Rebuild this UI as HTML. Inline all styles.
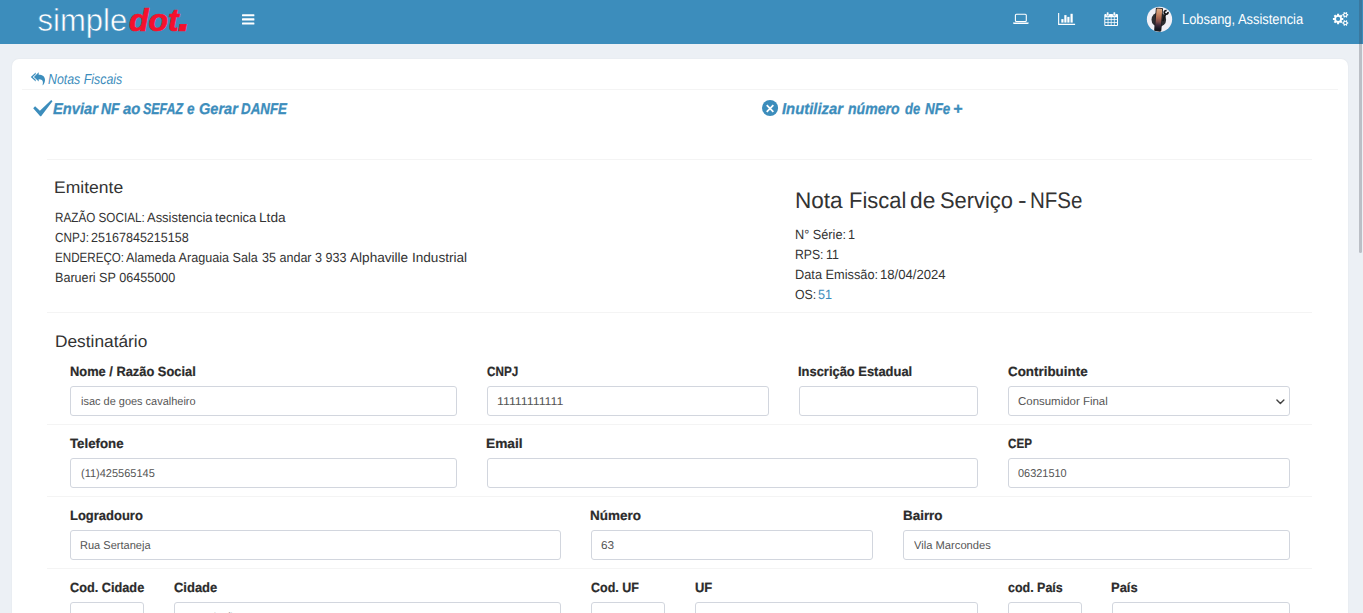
<!DOCTYPE html>
<html lang="pt-br">
<head>
<meta charset="utf-8">
<title>Nota Fiscal de Serviço - NFSe</title>
<style>
*{box-sizing:border-box}
html,body{margin:0;padding:0}
body{width:1363px;height:613px;overflow:hidden;position:relative;background:#ecf0f5;font-family:"Liberation Sans",sans-serif;color:#333}
.navbar{position:absolute;left:0;top:0;width:1363px;height:44px;background:#3c8dbc}
.card{position:absolute;left:12px;top:59px;width:1336px;height:600px;background:#fff;border-radius:7px 7px 0 0;box-shadow:0 0 2px rgba(0,0,0,.06)}
.tx{position:absolute;white-space:nowrap;text-rendering:geometricPrecision;transform-origin:0 0;line-height:1;margin:0;padding:0;display:block}
.hr{position:absolute;height:1px;background:#f4f4f4}
.fc{position:absolute;height:30px;border:1px solid #d2d6de;border-radius:3px;background:#fff}
svg{position:absolute;overflow:visible}
.logo{position:absolute;white-space:nowrap;line-height:1;transform-origin:0 0}
.sb{position:absolute;left:1359px;width:3px}
</style>
</head>
<body>

<header class="navbar">
</header>
<main class="card"></main>
<div class="hr" style="left:22px;top:89px;width:1316px"></div>
<div class="hr" style="left:47px;top:159px;width:1265px"></div>
<div class="hr" style="left:47px;top:312px;width:1265px"></div>
<div class="hr" style="left:47px;top:424px;width:1265px"></div>
<div class="hr" style="left:47px;top:496px;width:1265px"></div>
<div class="hr" style="left:47px;top:568px;width:1265px"></div>
<div class="fc" style="left:70px;top:386px;width:387px"></div>
<div class="fc" style="left:487px;top:386px;width:282px"></div>
<div class="fc" style="left:799px;top:386px;width:179px"></div>
<div class="fc" style="left:1008px;top:386px;width:282px"></div>
<div class="fc" style="left:70px;top:458px;width:387px"></div>
<div class="fc" style="left:487px;top:458px;width:491px"></div>
<div class="fc" style="left:1008px;top:458px;width:282px"></div>
<div class="fc" style="left:70px;top:530px;width:491px"></div>
<div class="fc" style="left:591px;top:530px;width:282px"></div>
<div class="fc" style="left:903px;top:530px;width:387px"></div>
<div class="fc" style="left:70px;top:602px;width:74px"></div>
<div class="fc" style="left:174px;top:602px;width:387px"></div>
<div class="fc" style="left:591px;top:602px;width:74px"></div>
<div class="fc" style="left:695px;top:602px;width:283px"></div>
<div class="fc" style="left:1008px;top:602px;width:74px"></div>
<div class="fc" style="left:1112px;top:602px;width:178px"></div>
<span class="tx" style="left:1181.87px;top:12px;line-height:16px;font-size:14.5px;font-weight:400;font-style:normal;color:#fff;transform:scaleX(0.8894)">Lobsang, Assistencia</span>
<span class="tx" style="left:47.50px;top:72px;line-height:16px;font-size:14.4px;font-weight:400;font-style:italic;color:#3c8dbc;transform:scaleX(0.8592)">Notas Fiscais</span>
<span class="tx" style="left:52.81px;top:101px;line-height:17px;font-size:15.6px;font-weight:700;font-style:italic;color:#3c8dbc;-webkit-text-stroke:0.3px #3c8dbc;transform:scaleX(0.9414)">Enviar</span>
<span class="tx" style="left:100.93px;top:101px;line-height:17px;font-size:15.6px;font-weight:700;font-style:italic;color:#3c8dbc;-webkit-text-stroke:0.3px #3c8dbc;transform:scaleX(0.8936)">NF</span>
<span class="tx" style="left:122.50px;top:101px;line-height:17px;font-size:15.6px;font-weight:700;font-style:italic;color:#3c8dbc;-webkit-text-stroke:0.3px #3c8dbc;transform:scaleX(0.9500)">ao</span>
<span class="tx" style="left:143.26px;top:101px;line-height:17px;font-size:15.6px;font-weight:700;font-style:italic;color:#3c8dbc;-webkit-text-stroke:0.3px #3c8dbc;transform:scaleX(0.7979)">SEFAZ</span>
<span class="tx" style="left:187.24px;top:101px;line-height:17px;font-size:15.6px;font-weight:700;font-style:italic;color:#3c8dbc;-webkit-text-stroke:0.3px #3c8dbc;transform:scaleX(0.8706)">e</span>
<span class="tx" style="left:198.57px;top:101px;line-height:17px;font-size:15.6px;font-weight:700;font-style:italic;color:#3c8dbc;-webkit-text-stroke:0.3px #3c8dbc;transform:scaleX(0.9341)">Gerar</span>
<span class="tx" style="left:240.64px;top:101px;line-height:17px;font-size:15.6px;font-weight:700;font-style:italic;color:#3c8dbc;-webkit-text-stroke:0.3px #3c8dbc;transform:scaleX(0.8556)">DANFE</span>
<span class="tx" style="left:781.91px;top:101px;line-height:17px;font-size:15.6px;font-weight:700;font-style:italic;color:#3c8dbc;-webkit-text-stroke:0.3px #3c8dbc;transform:scaleX(0.9519)">Inutilizar</span>
<span class="tx" style="left:848.13px;top:101px;line-height:17px;font-size:15.6px;font-weight:700;font-style:italic;color:#3c8dbc;-webkit-text-stroke:0.3px #3c8dbc;transform:scaleX(0.9011)">número</span>
<span class="tx" style="left:904.77px;top:101px;line-height:17px;font-size:15.6px;font-weight:700;font-style:italic;color:#3c8dbc;-webkit-text-stroke:0.3px #3c8dbc;transform:scaleX(0.8295)">de</span>
<span class="tx" style="left:924.84px;top:101px;line-height:17px;font-size:15.6px;font-weight:700;font-style:italic;color:#3c8dbc;-webkit-text-stroke:0.3px #3c8dbc;transform:scaleX(0.8587)">NFe</span>
<span class="tx" style="left:952.85px;top:101px;line-height:17px;font-size:15.6px;font-weight:700;font-style:italic;color:#3c8dbc;-webkit-text-stroke:0.3px #3c8dbc;transform:scaleX(1.0385)">+</span>
<span class="tx" style="left:54.34px;top:178px;line-height:19px;font-size:16.8px;font-weight:400;font-style:normal;color:#333;transform:scaleX(1.0443)">Emitente</span>
<span class="tx" style="left:54.63px;top:210px;line-height:15px;font-size:13.3px;font-weight:400;font-style:normal;color:#333;transform:scaleX(0.8800)">RAZÃO SOCIAL:</span>
<span class="tx" style="left:146.77px;top:210px;line-height:15px;font-size:13.3px;font-weight:400;font-style:normal;color:#333;transform:scaleX(0.9737)">Assistencia</span>
<span class="tx" style="left:215.07px;top:210px;line-height:15px;font-size:13.3px;font-weight:400;font-style:normal;color:#333;transform:scaleX(0.9821)">tecnica</span>
<span class="tx" style="left:258.68px;top:210px;line-height:15px;font-size:13.3px;font-weight:400;font-style:normal;color:#333;transform:scaleX(1.0305)">Ltda</span>
<span class="tx" style="left:55.07px;top:230px;line-height:15px;font-size:13.3px;font-weight:400;font-style:normal;color:#333;transform:scaleX(0.8821)">CNPJ:</span>
<span class="tx" style="left:90.74px;top:230px;line-height:15px;font-size:13.3px;font-weight:400;font-style:normal;color:#333;transform:scaleX(0.9444)">25167845215158</span>
<span class="tx" style="left:54.65px;top:250px;line-height:15px;font-size:13.3px;font-weight:400;font-style:normal;color:#333;transform:scaleX(0.8737)">ENDEREÇO:</span>
<span class="tx" style="left:126.28px;top:250px;line-height:15px;font-size:13.3px;font-weight:400;font-style:normal;color:#333;transform:scaleX(0.9487)">Alameda Araguaia Sala</span>
<span class="tx" style="left:262.00px;top:250px;line-height:15px;font-size:13.3px;font-weight:400;font-style:normal;color:#333;transform:scaleX(0.9440)">35 andar 3 933</span>
<span class="tx" style="left:350.06px;top:250px;line-height:15px;font-size:13.3px;font-weight:400;font-style:normal;color:#333;transform:scaleX(1.0222)">Alphaville Industrial</span>
<span class="tx" style="left:54.57px;top:270px;line-height:15px;font-size:13.3px;font-weight:400;font-style:normal;color:#333;transform:scaleX(0.9477)">Barueri SP 06455000</span>
<span class="tx" style="left:794.60px;top:188px;line-height:25px;font-size:22.6px;font-weight:400;font-style:normal;color:#333;transform:scaleX(0.9990)">Nota</span>
<span class="tx" style="left:848.56px;top:188px;line-height:25px;font-size:22.6px;font-weight:400;font-style:normal;color:#333;transform:scaleX(0.9711)">Fiscal</span>
<span class="tx" style="left:910.48px;top:188px;line-height:25px;font-size:22.6px;font-weight:400;font-style:normal;color:#333;transform:scaleX(1.0056)">de</span>
<span class="tx" style="left:940.23px;top:188px;line-height:25px;font-size:22.6px;font-weight:400;font-style:normal;color:#333;transform:scaleX(0.9683)">Serviço</span>
<span class="tx" style="left:1017.60px;top:188px;line-height:25px;font-size:22.6px;font-weight:400;font-style:normal;color:#333;transform:scaleX(1.1494)">-</span>
<span class="tx" style="left:1030.28px;top:188px;line-height:25px;font-size:22.6px;font-weight:400;font-style:normal;color:#333;transform:scaleX(0.9085)">NFSe</span>
<span class="tx" style="left:794.96px;top:227px;line-height:15px;font-size:13.3px;font-weight:400;font-style:normal;color:#333;transform:scaleX(0.9560)">N° Série:</span>
<span class="tx" style="left:848.01px;top:227px;line-height:15px;font-size:13.3px;font-weight:400;font-style:normal;color:#333;transform:scaleX(0.9541)">1</span>
<span class="tx" style="left:794.99px;top:247px;line-height:15px;font-size:13.3px;font-weight:400;font-style:normal;color:#333;transform:scaleX(0.9176)">RPS:</span>
<span class="tx" style="left:825.53px;top:247px;line-height:15px;font-size:13.3px;font-weight:400;font-style:normal;color:#333;transform:scaleX(0.9332)">11</span>
<span class="tx" style="left:794.96px;top:267px;line-height:15px;font-size:13.3px;font-weight:400;font-style:normal;color:#333;transform:scaleX(0.9614)">Data Emissão:</span>
<span class="tx" style="left:880.38px;top:267px;line-height:15px;font-size:13.3px;font-weight:400;font-style:normal;color:#333;transform:scaleX(0.9859)">18/04/2024</span>
<span class="tx" style="left:795.48px;top:287px;line-height:15px;font-size:13.3px;font-weight:400;font-style:normal;color:#333;transform:scaleX(0.9289)">OS:</span>
<span class="tx" style="left:818.42px;top:287px;line-height:15px;font-size:13.3px;font-weight:400;font-style:normal;color:#3c8dbc;transform:scaleX(0.9524)">51</span>
<span class="tx" style="left:54.56px;top:332px;line-height:19px;font-size:16.8px;font-weight:400;font-style:normal;color:#333;transform:scaleX(1.0311)">Destinatário</span>
<label class="tx" style="left:69.73px;top:364px;line-height:15px;font-size:13.3px;font-weight:700;font-style:normal;color:#2b2b2b;-webkit-text-stroke:0.22px #2b2b2b;transform:scaleX(0.9666)">Nome / Razão Social</label>
<label class="tx" style="left:486.88px;top:364px;line-height:15px;font-size:13.3px;font-weight:700;font-style:normal;color:#2b2b2b;-webkit-text-stroke:0.22px #2b2b2b;transform:scaleX(0.8800)">CNPJ</label>
<label class="tx" style="left:798.43px;top:364px;line-height:15px;font-size:13.3px;font-weight:700;font-style:normal;color:#2b2b2b;-webkit-text-stroke:0.22px #2b2b2b;transform:scaleX(0.9716)">Inscrição Estadual</label>
<label class="tx" style="left:1007.72px;top:364px;line-height:15px;font-size:13.3px;font-weight:700;font-style:normal;color:#2b2b2b;-webkit-text-stroke:0.22px #2b2b2b;transform:scaleX(1.0072)">Contribuinte</label>
<label class="tx" style="left:70.47px;top:436px;line-height:15px;font-size:13.3px;font-weight:700;font-style:normal;color:#2b2b2b;-webkit-text-stroke:0.22px #2b2b2b;transform:scaleX(0.9970)">Telefone</label>
<label class="tx" style="left:486.27px;top:436px;line-height:15px;font-size:13.3px;font-weight:700;font-style:normal;color:#2b2b2b;-webkit-text-stroke:0.22px #2b2b2b;transform:scaleX(1.0303)">Email</label>
<label class="tx" style="left:1007.78px;top:436px;line-height:15px;font-size:13.3px;font-weight:700;font-style:normal;color:#2b2b2b;-webkit-text-stroke:0.22px #2b2b2b;transform:scaleX(0.8741)">CEP</label>
<label class="tx" style="left:69.72px;top:508px;line-height:15px;font-size:13.3px;font-weight:700;font-style:normal;color:#2b2b2b;-webkit-text-stroke:0.22px #2b2b2b;transform:scaleX(0.9767)">Logradouro</label>
<label class="tx" style="left:590.39px;top:508px;line-height:15px;font-size:13.3px;font-weight:700;font-style:normal;color:#2b2b2b;-webkit-text-stroke:0.22px #2b2b2b;transform:scaleX(1.0131)">Número</label>
<label class="tx" style="left:902.59px;top:508px;line-height:15px;font-size:13.3px;font-weight:700;font-style:normal;color:#2b2b2b;-webkit-text-stroke:0.22px #2b2b2b;transform:scaleX(1.0090)">Bairro</label>
<label class="tx" style="left:70.24px;top:580px;line-height:15px;font-size:13.3px;font-weight:700;font-style:normal;color:#2b2b2b;-webkit-text-stroke:0.22px #2b2b2b;transform:scaleX(0.9567)">Cod. Cidade</label>
<label class="tx" style="left:173.93px;top:580px;line-height:15px;font-size:13.3px;font-weight:700;font-style:normal;color:#2b2b2b;-webkit-text-stroke:0.22px #2b2b2b;transform:scaleX(0.9758)">Cidade</label>
<label class="tx" style="left:590.95px;top:580px;line-height:15px;font-size:13.3px;font-weight:700;font-style:normal;color:#2b2b2b;-webkit-text-stroke:0.22px #2b2b2b;transform:scaleX(0.9380)">Cod. UF</label>
<label class="tx" style="left:694.52px;top:580px;line-height:15px;font-size:13.3px;font-weight:700;font-style:normal;color:#2b2b2b;-webkit-text-stroke:0.22px #2b2b2b;transform:scaleX(0.9750)">UF</label>
<label class="tx" style="left:1007.76px;top:580px;line-height:15px;font-size:13.3px;font-weight:700;font-style:normal;color:#2b2b2b;-webkit-text-stroke:0.22px #2b2b2b;transform:scaleX(0.9383)">cod. País</label>
<label class="tx" style="left:1111.23px;top:580px;line-height:15px;font-size:13.3px;font-weight:700;font-style:normal;color:#2b2b2b;-webkit-text-stroke:0.22px #2b2b2b;transform:scaleX(0.9728)">País</label>
<span class="tx" style="left:80.86px;top:396px;line-height:12px;font-size:11.4px;font-weight:400;font-style:normal;color:#555;transform:scaleX(0.9624)">isac de goes cavalheiro</span>
<span class="tx" style="left:497.28px;top:396px;line-height:12px;font-size:11.4px;font-weight:400;font-style:normal;color:#555;transform:scaleX(1.0841)">11111111111</span>
<span class="tx" style="left:1018.27px;top:396px;line-height:12px;font-size:11.4px;font-weight:400;font-style:normal;color:#555;transform:scaleX(1.0052)">Consumidor Final</span>
<span class="tx" style="left:81.07px;top:468px;line-height:12px;font-size:11.4px;font-weight:400;font-style:normal;color:#555;transform:scaleX(0.9653)">(11)425565145</span>
<span class="tx" style="left:1018.39px;top:468px;line-height:12px;font-size:11.4px;font-weight:400;font-style:normal;color:#555;transform:scaleX(0.9599)">06321510</span>
<span class="tx" style="left:80.20px;top:540px;line-height:12px;font-size:11.4px;font-weight:400;font-style:normal;color:#555;transform:scaleX(0.9686)">Rua Sertaneja</span>
<span class="tx" style="left:601.06px;top:540px;line-height:12px;font-size:11.4px;font-weight:400;font-style:normal;color:#555;transform:scaleX(1.0353)">63</span>
<span class="tx" style="left:913.78px;top:540px;line-height:12px;font-size:11.4px;font-weight:400;font-style:normal;color:#555;transform:scaleX(0.9812)">Vila Marcondes</span>
<span class="tx" style="left:184.51px;top:612px;line-height:12px;font-size:11.4px;font-weight:400;font-style:normal;color:#555;transform:scaleX(0.9287)">Carapicuíba</span>
<div class="logo" style="left:37.6px;top:5.2px;font-size:31px;color:#fff"><span style="-webkit-text-stroke:0.55px #3c8dbc">simple</span><span style="display:inline-block;transform-origin:0 100%;transform:scaleX(1.03);margin-left:1.6px;font-weight:700;font-style:italic;color:#f5102c;-webkit-text-stroke:0.7px #f5102c">dot<span style="font-size:44px;line-height:0;margin-left:-0.9px">.</span></span></div>
<svg style="left:242px;top:13.6px" width="12.4" height="10.8" viewBox="0 0 12.4 10.8"><rect x="0" y="0.2" width="12.4" height="2.1" rx=".5" fill="#fff"/><rect x="0" y="4.3" width="12.4" height="2.1" rx=".5" fill="#fff"/><rect x="0" y="8.4" width="12.4" height="2.1" rx=".5" fill="#fff"/></svg>
<svg style="left:0;top:0" width="1363" height="44" viewBox="0 0 1363 44"><rect x="1015.4" y="14.2" width="10.9" height="7.3" rx="1" fill="none" stroke="#fff" stroke-width="1.1"/><path d="M1013 22.4h15.7v.5q0 1-1.2 1h-13.3q-1.2 0-1.2-1z" fill="#fff"/><path d="M1058.1 13.1h1.1v10.7h15.9v1.1h-17z" fill="#fff"/><rect x="1061.3" y="19.1" width="2.2" height="3.5" fill="#fff"/><rect x="1064.3" y="15.1" width="2.2" height="7.5" fill="#fff"/><rect x="1067.3" y="16.9" width="2.2" height="5.7" fill="#fff"/><rect x="1070.5" y="13.8" width="2.2" height="8.8" fill="#fff"/><path fill-rule="evenodd" fill="#fff" d="M1105.3 13.9H1117.0q1 0 1 1V25.0q0 1 -1 1H1105.3q-1 0 -1 -1V14.9q0 -1 1 -1z M1105.30 17.20h2.36v2.10h-2.36z M1108.41 17.20h2.36v2.10h-2.36z M1111.53 17.20h2.36v2.10h-2.36z M1114.64 17.20h2.36v2.10h-2.36z M1105.30 20.05h2.36v2.10h-2.36z M1108.41 20.05h2.36v2.10h-2.36z M1111.53 20.05h2.36v2.10h-2.36z M1114.64 20.05h2.36v2.10h-2.36z M1105.30 22.90h2.36v2.10h-2.36z M1108.41 22.90h2.36v2.10h-2.36z M1111.53 22.90h2.36v2.10h-2.36z M1114.64 22.90h2.36v2.10h-2.36z"/><rect x="1106.6000000000001" y="11.9" width="2.2" height="3.9" rx="1" fill="#fff" stroke="#3c8dbc" stroke-width=".5"/><rect x="1113.2" y="11.9" width="2.2" height="3.9" rx="1" fill="#fff" stroke="#3c8dbc" stroke-width=".5"/><path fill-rule="evenodd" fill="#fff" d="M1343.30 17.92 L1343.30 19.98 L1341.97 19.96 L1341.55 20.97 L1342.51 21.89 L1341.04 23.36 L1340.12 22.40 L1339.11 22.82 L1339.13 24.15 L1337.07 24.15 L1337.09 22.82 L1336.08 22.40 L1335.16 23.36 L1333.69 21.89 L1334.65 20.97 L1334.23 19.96 L1332.90 19.98 L1332.90 17.92 L1334.23 17.94 L1334.65 16.93 L1333.69 16.01 L1335.16 14.54 L1336.08 15.50 L1337.09 15.08 L1337.07 13.75 L1339.13 13.75 L1339.11 15.08 L1340.12 15.50 L1341.04 14.54 L1342.51 16.01 L1341.55 16.93 L1341.97 17.94Z M1340.20 18.95 A2.1 2.1 0 1 0 1336.00 18.95 A2.1 2.1 0 1 0 1340.20 18.95Z"/><path fill-rule="evenodd" fill="#fff" d="M1348.20 14.02 L1348.20 15.58 L1347.28 15.50 L1346.90 16.16 L1347.42 16.92 L1346.08 17.70 L1345.68 16.86 L1344.92 16.86 L1344.52 17.70 L1343.18 16.92 L1343.70 16.16 L1343.32 15.50 L1342.40 15.58 L1342.40 14.02 L1343.32 14.10 L1343.70 13.44 L1343.18 12.68 L1344.52 11.90 L1344.92 12.74 L1345.68 12.74 L1346.08 11.90 L1347.42 12.68 L1346.90 13.44 L1347.28 14.10Z M1346.45 14.80 A1.15 1.15 0 1 0 1344.15 14.80 A1.15 1.15 0 1 0 1346.45 14.80Z"/><path fill-rule="evenodd" fill="#fff" d="M1348.20 22.22 L1348.20 23.78 L1347.28 23.70 L1346.90 24.36 L1347.42 25.12 L1346.08 25.90 L1345.68 25.06 L1344.92 25.06 L1344.52 25.90 L1343.18 25.12 L1343.70 24.36 L1343.32 23.70 L1342.40 23.78 L1342.40 22.22 L1343.32 22.30 L1343.70 21.64 L1343.18 20.88 L1344.52 20.10 L1344.92 20.94 L1345.68 20.94 L1346.08 20.10 L1347.42 20.88 L1346.90 21.64 L1347.28 22.30Z M1346.45 23.00 A1.15 1.15 0 1 0 1344.15 23.00 A1.15 1.15 0 1 0 1346.45 23.00Z"/><defs><linearGradient id="scr" x1="0" y1="0" x2="0" y2="1"><stop offset="0" stop-color="#dcab86"/><stop offset=".25" stop-color="#c88763"/><stop offset=".45" stop-color="#a9644f"/><stop offset=".6" stop-color="#7d4c4a"/><stop offset=".75" stop-color="#3f2b3a"/><stop offset=".9" stop-color="#1b1a24"/><stop offset="1" stop-color="#121218"/></linearGradient><clipPath id="avc"><circle cx="1159.5" cy="19.3" r="12.65"/></clipPath></defs><circle cx="1159.5" cy="19.3" r="12.65" fill="#f1f0f6"/><g clip-path="url(#avc)"><circle cx="1158.8" cy="19.7" r="7.3" fill="#2d2d30"/><g transform="rotate(4.5 1158.6 19.5)"><rect x="1155.0" y="7.9" width="7.2" height="23.6" rx="1.2" fill="#1d1d22"/><rect x="1155.8" y="8.6" width="5.6" height="22" rx=".8" fill="url(#scr)"/></g><path d="M1163.1 20.4L1165.3 14.6" stroke="#141416" stroke-width="1.7" stroke-linecap="round"/><path d="M1167.9 11.9A1.85 1.85 0 1 1 1166.6 10.6" fill="none" stroke="#141416" stroke-width="1.8"/></g></svg>
<svg style="left:28px;top:68px" width="24" height="20" viewBox="0 0 24 20"><g fill="#3c8dbc"><path d="M7.7 4.5L2.8 9 7.7 13.6V11.8L4.7 9 7.7 6.3z"/><path d="M10.7 4.3L5.9 9l4.8 4.6V11.2c3 0 4.2.9 4.2 3 0 1-.1 1.800-.3 2.600-.1.400.3.500.5.200 1.100-1.600 1.900-3.300 1.900-5.100 0-3.400-2.500-5-6.300-5.100z"/></g></svg>
<svg style="left:30px;top:96px" width="30" height="24" viewBox="0 0 30 24"><path fill="#3c8dbc" d="M5.1 10.3L3.2 12.3 10.2 20.2H11.1L22.5 5.3 21.2 3.9 9.9 14.8z"/></svg>
<svg style="left:762.1px;top:100.2px" width="16.1" height="16.1" viewBox="0 0 16 16"><circle cx="8" cy="8" r="8" fill="#3c8dbc"/><path d="M4.7 5.1l6.6 6.6M11.3 5.1l-6.600 6.600" stroke="#fff" stroke-width="1.75" stroke-linecap="butt"/></svg>
<svg style="left:1275.6px;top:398.5px" width="8.8" height="6" viewBox="0 0 8.8 6"><path d="M0.9 0.9L4.4 4.6 7.9 0.9" fill="none" stroke="#444" stroke-width="1.4" stroke-linecap="round" stroke-linejoin="round"/></svg>
<div class="sb" style="top:0;height:44px;background:#3a789f"></div>
<div class="sb" style="top:44px;height:209px;background:#bbbfc6;border-radius:0 0 1.5px 1.5px"></div>
</body></html>
